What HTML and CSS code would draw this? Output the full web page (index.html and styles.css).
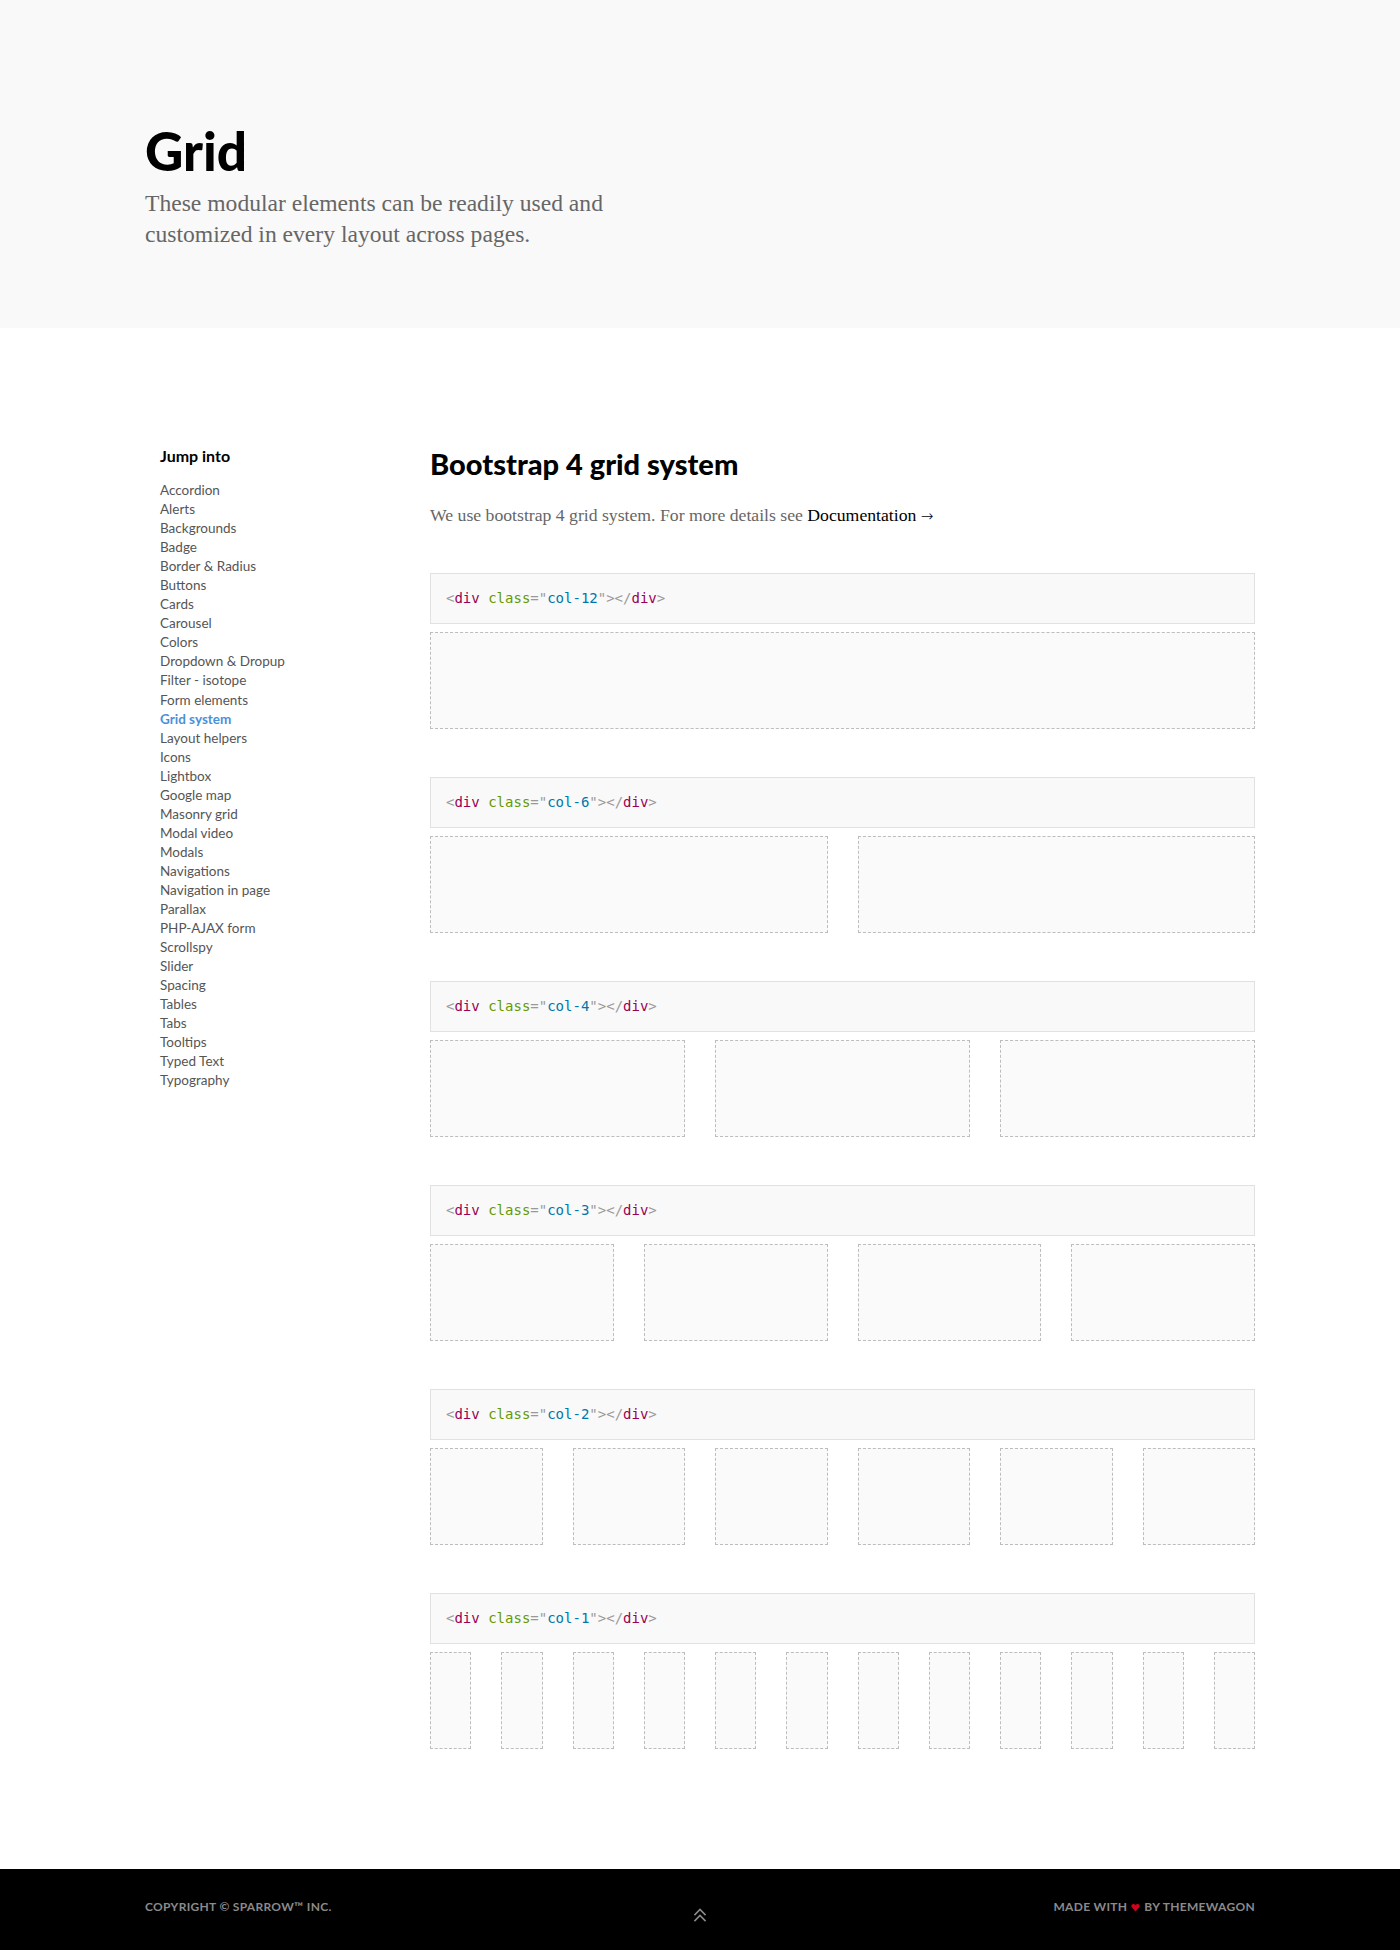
FILE: index.html
```html
<!DOCTYPE html>
<html lang="en">
<head>
<meta charset="utf-8">
<title>Grid</title>
<link rel="stylesheet" href="styles.css">
</head>
<body>
<header class="hero">
  <div class="container">
    <h1 class="hero-title">Grid</h1>
    <p class="hero-lead">These modular elements can be readily used and customized in every layout across pages.</p>
  </div>
</header>

<main class="content">
  <div class="container">
    <div class="layout">
    <aside class="sidebar">
      <h5 class="sidebar-title">Jump into</h5>
      <ul class="nav-list">
        <li><a href="#">Accordion</a></li>
        <li><a href="#">Alerts</a></li>
        <li><a href="#">Backgrounds</a></li>
        <li><a href="#">Badge</a></li>
        <li><a href="#">Border &amp; Radius</a></li>
        <li><a href="#">Buttons</a></li>
        <li><a href="#">Cards</a></li>
        <li><a href="#">Carousel</a></li>
        <li><a href="#">Colors</a></li>
        <li><a href="#">Dropdown &amp; Dropup</a></li>
        <li><a href="#">Filter - isotope</a></li>
        <li><a href="#">Form elements</a></li>
        <li><a href="#" class="active">Grid system</a></li>
        <li><a href="#">Layout helpers</a></li>
        <li><a href="#">Icons</a></li>
        <li><a href="#">Lightbox</a></li>
        <li><a href="#">Google map</a></li>
        <li><a href="#">Masonry grid</a></li>
        <li><a href="#">Modal video</a></li>
        <li><a href="#">Modals</a></li>
        <li><a href="#">Navigations</a></li>
        <li><a href="#">Navigation in page</a></li>
        <li><a href="#">Parallax</a></li>
        <li><a href="#">PHP-AJAX form</a></li>
        <li><a href="#">Scrollspy</a></li>
        <li><a href="#">Slider</a></li>
        <li><a href="#">Spacing</a></li>
        <li><a href="#">Tables</a></li>
        <li><a href="#">Tabs</a></li>
        <li><a href="#">Tooltips</a></li>
        <li><a href="#">Typed Text</a></li>
        <li><a href="#">Typography</a></li>
      </ul>
    </aside>

    <section class="main-col">
      <h3 class="section-title">Bootstrap 4 grid system</h3>
      <p class="section-text">We use bootstrap 4 grid system. For more details see <a href="#" class="doc-link">Documentation <span class="arrow">&rarr;</span></a></p>

      <div class="demo">
        <pre class="code"><span class="punc">&lt;</span><span class="tag">div</span> <span class="attr">class</span><span class="punc">="</span><span class="val">col-12</span><span class="punc">"&gt;&lt;/</span><span class="tag">div</span><span class="punc">&gt;</span></pre>
        <div class="grid cols-1">
          <div class="cell"></div>
        </div>
      </div>

      <div class="demo">
        <pre class="code"><span class="punc">&lt;</span><span class="tag">div</span> <span class="attr">class</span><span class="punc">="</span><span class="val">col-6</span><span class="punc">"&gt;&lt;/</span><span class="tag">div</span><span class="punc">&gt;</span></pre>
        <div class="grid cols-2">
          <div class="cell"></div><div class="cell"></div>
        </div>
      </div>

      <div class="demo">
        <pre class="code"><span class="punc">&lt;</span><span class="tag">div</span> <span class="attr">class</span><span class="punc">="</span><span class="val">col-4</span><span class="punc">"&gt;&lt;/</span><span class="tag">div</span><span class="punc">&gt;</span></pre>
        <div class="grid cols-3">
          <div class="cell"></div><div class="cell"></div><div class="cell"></div>
        </div>
      </div>

      <div class="demo">
        <pre class="code"><span class="punc">&lt;</span><span class="tag">div</span> <span class="attr">class</span><span class="punc">="</span><span class="val">col-3</span><span class="punc">"&gt;&lt;/</span><span class="tag">div</span><span class="punc">&gt;</span></pre>
        <div class="grid cols-4">
          <div class="cell"></div><div class="cell"></div><div class="cell"></div><div class="cell"></div>
        </div>
      </div>

      <div class="demo">
        <pre class="code"><span class="punc">&lt;</span><span class="tag">div</span> <span class="attr">class</span><span class="punc">="</span><span class="val">col-2</span><span class="punc">"&gt;&lt;/</span><span class="tag">div</span><span class="punc">&gt;</span></pre>
        <div class="grid cols-6">
          <div class="cell"></div><div class="cell"></div><div class="cell"></div><div class="cell"></div><div class="cell"></div><div class="cell"></div>
        </div>
      </div>

      <div class="demo">
        <pre class="code"><span class="punc">&lt;</span><span class="tag">div</span> <span class="attr">class</span><span class="punc">="</span><span class="val">col-1</span><span class="punc">"&gt;&lt;/</span><span class="tag">div</span><span class="punc">&gt;</span></pre>
        <div class="grid cols-12">
          <div class="cell"></div><div class="cell"></div><div class="cell"></div><div class="cell"></div><div class="cell"></div><div class="cell"></div><div class="cell"></div><div class="cell"></div><div class="cell"></div><div class="cell"></div><div class="cell"></div><div class="cell"></div>
        </div>
      </div>
    </section>
    </div>
  </div>
</main>

<footer class="footer">
  <div class="container footer-row">
    <p class="footer-text">Copyright &copy; Sparrow&trade; Inc.</p>
    <a href="#" class="to-top" aria-label="Back to top">
      <svg width="14" height="16" viewBox="0 0 14 16" fill="none" stroke="currentColor" stroke-width="1.6" stroke-linecap="square">
        <polyline points="2,7.5 7,2.5 12,7.5"/>
        <polyline points="2,13.5 7,8.5 12,13.5"/>
      </svg>
    </a>
    <p class="footer-text footer-right">Made with <svg class="heart" width="9" height="9" viewBox="0 0 10 10"><path d="M5 9.5 L1 5 C-0.2 3.6 0.3 1 2.6 1 C3.8 1 4.6 1.8 5 2.6 C5.4 1.8 6.2 1 7.4 1 C9.7 1 10.2 3.6 9 5 Z" fill="#d0021b"/></svg> by Themewagon</p>
  </div>
</footer>
</body>
</html>
```

FILE: styles.css
```css
* { box-sizing: border-box; }

body {
  margin: 0;
  font-family: "Lato", "Liberation Sans", sans-serif;
  color: #000;
  background: #fff;
}

.container {
  width: 1140px;
  margin: 0 auto;
  padding: 0 15px;
}

/* Hero */
.hero {
  background: #f9f9f9;
  height: 328px;
  padding-top: 122px;
}
.hero-title {
  margin: 0;
  font-family: "Lato", sans-serif;
  font-weight: 900;
  font-size: 53px;
  line-height: 58px;
  color: #000;
}
.hero-lead {
  margin: 8px 0 0;
  max-width: 520px;
  font-family: "Liberation Serif", serif;
  font-size: 23.6px;
  line-height: 31px;
  color: #666;
}

/* Content */
.content {
  padding: 118px 0 120px;
}
.layout {
  display: flex;
  margin: 0 -15px;
}
.sidebar {
  width: 285px;
  flex: none;
  padding: 0 15px 0 30px;
}
.sidebar-title {
  margin: 0 0 15px;
  font-size: 16px;
  line-height: 20px;
  font-weight: 700;
  color: #000;
}
.nav-list {
  list-style: none;
  margin: 0;
  padding: 0;
}
.nav-list li {
  font-size: 13.5px;
  line-height: 19.05px;
}
.nav-list a {
  color: #555;
  text-decoration: none;
}
.nav-list a.active {
  color: #4a90d9;
  font-weight: 700;
}

.main-col {
  flex: 1;
  min-width: 0;
  padding: 0 15px;
}
.section-title {
  margin: 0;
  font-size: 29px;
  line-height: 36px;
  font-weight: 900;
  color: #000;
}
.section-text {
  margin: 20px 0 44px;
  font-family: "Liberation Serif", serif;
  font-size: 17.7px;
  line-height: 26px;
  color: #666;
}
.doc-link {
  color: #000;
  text-decoration: none;
}
.doc-link .arrow {
  font-family: "DejaVu Sans", sans-serif;
  font-size: 15px;
  font-weight: 300;
}

.demo {
  margin-bottom: 48px;
}
.demo:last-child {
  margin-bottom: 0;
}
.code {
  margin: 0 0 8px;
  padding: 14px 15px;
  background: #f9f9f9;
  border: 1px solid #e1e1e1;
  font-family: "DejaVu Sans Mono", "Liberation Mono", monospace;
  font-size: 14px;
  line-height: 21px;
  color: #000;
}
.code .punc { color: #999; }
.code .tag { color: #905; }
.code .attr { color: #690; }
.code .val { color: #07a; }

.grid {
  display: grid;
  gap: 30px;
}
.cols-1 { grid-template-columns: repeat(1, 1fr); }
.cols-2 { grid-template-columns: repeat(2, 1fr); }
.cols-3 { grid-template-columns: repeat(3, 1fr); }
.cols-4 { grid-template-columns: repeat(4, 1fr); }
.cols-6 { grid-template-columns: repeat(6, 1fr); }
.cols-12 { grid-template-columns: repeat(12, 1fr); }
.cell {
  height: 97px;
  background: #fafafa;
  border: 1px dashed #bdbdbd;
}

/* Footer */
.footer {
  background: #000;
  height: 81px;
  padding-top: 30px;
}
.footer-row {
  display: grid;
  grid-template-columns: 1fr auto 1fr;
  align-items: start;
}
.footer-text {
  margin: 0;
  font-size: 12px;
  line-height: 16px;
  font-weight: 700;
  text-transform: uppercase;
  letter-spacing: 0.3px;
  color: #8a8a8a;
  display: flex;
  align-items: center;
  gap: 4px;
}
.footer-right {
  justify-content: flex-end;
}
.footer-text .heart {
  display: block;
}
.to-top {
  color: #8a8a8a;
  margin-top: 8px;
  display: block;
  line-height: 0;
}
```
